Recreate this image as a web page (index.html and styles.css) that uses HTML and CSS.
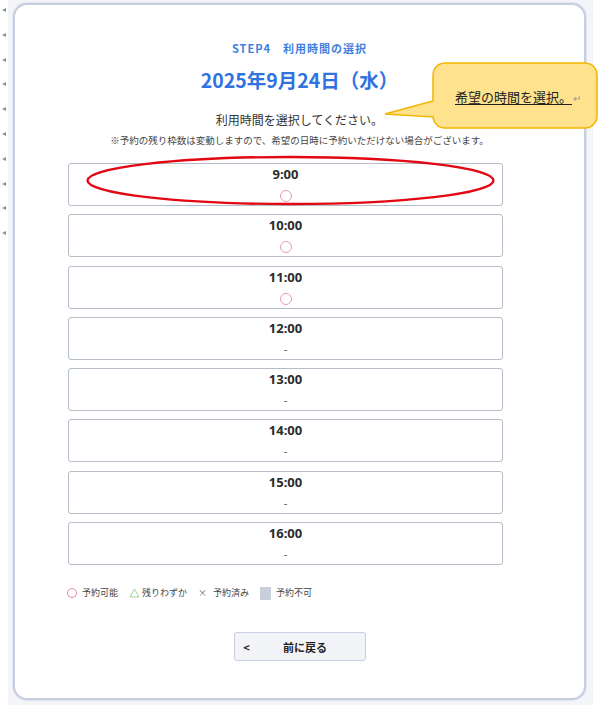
FILE: index.html
```html
<!DOCTYPE html>
<html lang="ja">
<head>
<meta charset="utf-8">
<title>STEP4 利用時間の選択</title>
<link rel="stylesheet" href="styles.css">
</head>
<body>
<div class="page">
  <div class="gutter">
    <span class="pmark"></span><span class="pmark"></span><span class="pmark"></span><span class="pmark"></span><span class="pmark"></span>
    <span class="pmark"></span><span class="pmark"></span><span class="pmark"></span><span class="pmark"></span><span class="pmark"></span>
  </div>
  <div class="stage">
    <div class="card">
      <div class="step">STEP4　利用時間の選択</div>
      <h1 class="date">2025年9月24日（水）</h1>
      <p class="lead">利用時間を選択してください。</p>
      <p class="note">※予約の残り枠数は変動しますので、希望の日時に予約いただけない場合がございます。</p>

      <div class="slots">
        <div class="slot"><span class="time">9:00</span><span class="mark ok"></span></div>
        <div class="slot"><span class="time">10:00</span><span class="mark ok"></span></div>
        <div class="slot"><span class="time">11:00</span><span class="mark ok"></span></div>
        <div class="slot"><span class="time">12:00</span><span class="dash">-</span></div>
        <div class="slot"><span class="time">13:00</span><span class="dash">-</span></div>
        <div class="slot"><span class="time">14:00</span><span class="dash">-</span></div>
        <div class="slot"><span class="time">15:00</span><span class="dash">-</span></div>
        <div class="slot"><span class="time">16:00</span><span class="dash">-</span></div>
      </div>

      <div class="legend">
        <span class="lg"><span class="lg-circle"></span>予約可能</span>
        <span class="lg"><svg class="lg-tri" width="11" height="10" viewBox="0 0 11 10"><path d="M5.5 1 L10 9 L1 9 Z" fill="none" stroke="#a9cf9c" stroke-width="1"/></svg>残りわずか</span>
        <span class="lg"><span class="lg-x">×</span>予約済み</span>
        <span class="lg"><span class="lg-sq"></span>予約不可</span>
      </div>

      <div class="actions">
        <button class="back"><span class="chev">&lt;</span><span class="back-label">前に戻る</span></button>
      </div>
    </div>
  </div>

  <svg class="ellipse" width="420" height="56" viewBox="0 0 420 56">
    <ellipse cx="207.5" cy="27.5" rx="203" ry="23.5" fill="none" stroke="#e30613" stroke-width="2.4"/>
  </svg>

  <div class="callout">
    <svg class="callout-shape" width="220" height="76" viewBox="0 0 220 76">
      <path d="M65 5 H205 A12 12 0 0 1 217 17 V58 A12 12 0 0 1 205 70 H65 A12 12 0 0 1 53 58 V59 L5 56 L53 43 V17 A12 12 0 0 1 65 5 Z" fill="#fee28e" stroke="#f3b400" stroke-width="1.5"/>
    </svg>
    <span class="callout-text"><u>希望の時間を選択。</u><span class="ret">↵</span></span>
  </div>
</div>
</body>
</html>
```
FILE: styles.css
```css
* { box-sizing: border-box; }
html, body { margin: 0; padding: 0; background: #ffffff; }
body {
  font-family: "Noto Sans CJK JP", "Noto Sans", sans-serif;
  color: #333;
  width: 600px;
  height: 711px;
  overflow: hidden;
}
.page {
  position: relative;
  display: flex;
  width: 600px;
  height: 711px;
}
.gutter {
  width: 8px;
  display: flex;
  flex-direction: column;
  align-items: center;
  padding-top: 8px;
  gap: 20.8px;
}
.pmark {
  display: block;
  width: 0;
  height: 0;
  border-top: 2px solid transparent;
  border-bottom: 2px solid transparent;
  border-right: 4px solid #8a8f99;
}
.stage {
  width: 585px;
  height: 705px;
  background: #f4f5f9;
  padding: 3px 7px 5px 5px;
}
.card {
  height: 697px;
  background: #fff;
  border: 2px solid #c8cee2;
  border-radius: 14px;
  box-shadow: 0 0 0 1px #e2e5ef;
  padding-top: 35px;
  display: flex;
  flex-direction: column;
  align-items: center;
}
.step {
  font-size: 11px;
  line-height: 16px;
  font-weight: 700;
  color: #3f7fe0;
  letter-spacing: 1px;
}
.date {
  margin: 10px 0 0;
  font-size: 19.5px;
  line-height: 28px;
  font-weight: 700;
  color: #2f72e0;
}
.lead {
  margin: 17px 0 0;
  font-size: 12px;
  line-height: 18px;
  color: #333;
}
.note {
  margin: 4px 0 0;
  font-size: 9.5px;
  line-height: 14px;
  color: #444;
}
.slots {
  align-self: flex-start;
  margin: 16px 0 0 53px;
  width: 435px;
  display: flex;
  flex-direction: column;
  gap: 8.3px;
}
.slot {
  height: 43px;
  border: 1px solid #b5bdc9;
  border-radius: 3px;
  background: #fff;
  display: flex;
  flex-direction: column;
  align-items: center;
  padding-top: 2px;
}
.time {
  font-family: "Noto Sans", sans-serif;
  font-size: 13px;
  line-height: 17px;
  font-weight: 700;
  color: #2b2b2b;
}
.mark.ok {
  margin-top: 7px;
  width: 12px;
  height: 12px;
  border: 1.3px solid #e79bbb;
  border-radius: 50%;
}
.dash {
  margin-top: 4px;
  font-size: 12px;
  line-height: 16px;
  color: #666;
}
.legend {
  align-self: flex-start;
  margin: 21px 0 0 52px;
  display: flex;
  align-items: center;
  gap: 11px;
  font-size: 9px;
  line-height: 14px;
  color: #444;
}
.lg { display: flex; align-items: center; }
.lg-circle {
  width: 10px;
  height: 10px;
  border: 1.2px solid #e58aae;
  border-radius: 50%;
  margin-right: 5px;
}
.lg-tri { margin-right: 2px; }
.lg-x { color: #666; font-size: 9px; margin-right: 6px; }
.lg-sq {
  width: 11px;
  height: 13px;
  background: #c9cedd;
  margin-right: 5px;
}
.actions {
  margin-top: 32px;
  display: flex;
  justify-content: center;
}
.back {
  width: 132px;
  height: 29px;
  background: #f3f4f8;
  border: 1.5px solid #c9cee0;
  border-radius: 3px;
  display: flex;
  align-items: center;
  padding: 0 0 0 7px;
  font-family: "Noto Sans CJK JP", "Noto Sans", sans-serif;
  color: #222;
}
.chev { font-size: 11px; font-weight: 700; width: 10px; }
.back-label {
  flex: 1;
  text-align: center;
  font-size: 11px;
  font-weight: 700;
  padding-right: 6px;
}
.ellipse {
  position: absolute;
  left: 83px;
  top: 153px;
}
.callout {
  position: absolute;
  left: 380px;
  top: 58px;
  width: 220px;
  height: 76px;
}
.callout-shape { position: absolute; left: 0; top: 0; }
.callout-text {
  position: absolute;
  left: 75px;
  top: 30px;
  font-size: 13px;
  line-height: 18px;
  color: #222;
  white-space: nowrap;
}
.callout-text u { text-underline-offset: 2px; }
.ret { color: #9a9a9a; font-size: 10px; margin-left: 1px; }
```
